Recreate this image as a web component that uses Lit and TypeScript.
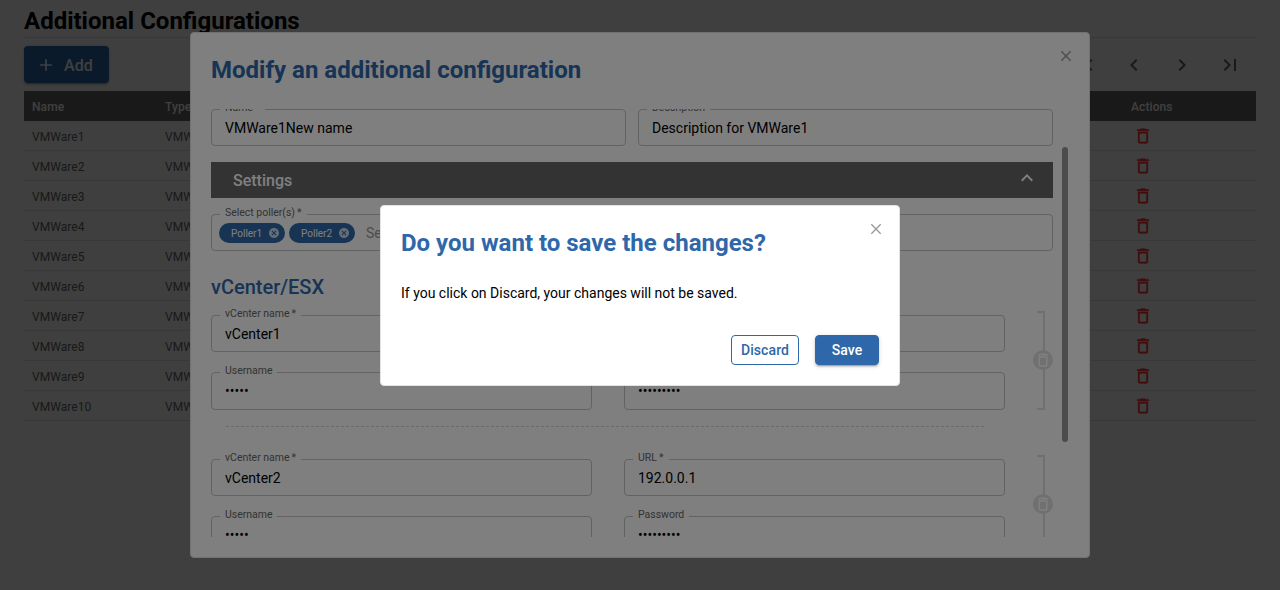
import { LitElement, html, svg, css } from "lit";
import { customElement, property } from "lit/decorators.js";

const trash = svg`<path d="M6 19c0 1.1.9 2 2 2h8c1.1 0 2-.9 2-2V7H6v12zM8 9h8v10H8V9zm7.500-5l-1-1h-5l-1 1H5v2h14V4h-3.500z"/>`;
const cross = svg`<path d="M5 5 19 19M19 5 5 19" fill="none" stroke="currentColor" stroke-width="2"/>`;

@customElement("outlined-field")
class OutlinedField extends LitElement {
  @property() label = "";
  @property() value = "";
  static styles = css`
    :host { display: block; height: 37px; box-sizing: border-box; min-width: 0; }
    fieldset { box-sizing: border-box; margin: -5px 0 0; height: calc(100% + 5px); min-width: 0; padding: 0 8px; border: 1px solid #c4c4c4; border-radius: 4px; }
    legend { height: 11px; padding: 0 5px; font-size: 10.5px; line-height: 11px; letter-spacing: -0.02px; color: #666; white-space: nowrap; }
    .text { display: block; margin-top: -2px; }
    .value { display: flex; align-items: center; height: 25px; padding: 0 5px; font-size: 14px; color: #000; white-space: nowrap; }
  `;
  render() {
    return html`<fieldset><legend><span class="text">${this.label}</span></legend>
      <div class="value"><slot>${this.value}</slot></div></fieldset>`;
  }
}

@customElement("app-root")
class AppRoot extends LitElement {
  static styles = css`
    :host { display: block; position: relative; width: 1280px; height: 590px; overflow: hidden; background: #fff; font-family: Roboto, sans-serif; color: #000; }
    *, *::before { box-sizing: border-box; }
    svg { display: block; fill: currentColor; flex: none; }
    h1, h2, h3, p { margin: 0; }
    .page { padding: 0 24px; }
    h1 { height: 38px; border-bottom: 1px solid #e3e3e3; font-size: 24px; font-weight: 700; line-height: 42px; }
    .bar { display: flex; align-items: center; justify-content: space-between; height: 53px; }
    .add { display: flex; align-items: center; gap: 8px; width: 85px; height: 37px; margin-bottom: 1px; padding: 2px 0 0 12px; border-radius: 4px; background: #2e68aa; color: #fff; font-size: 16px; font-weight: 500; letter-spacing: .1px; box-shadow: 0 3px 1px -2px #0003, 0 2px 2px #0002, 0 1px 5px #0002; }
    .add svg { margin-top: -1px; }
    .pager { display: flex; gap: 24px; padding-right: 14px; color: #666; }
    .head, .row { display: grid; grid-template-columns: 133px 966px 1fr; height: 30px; align-items: center; padding: 2px 0 0 8px; font-size: 12px; }
    .head { background: #666; color: #fff; font-weight: 500; letter-spacing: .1px; }
    .row { border-bottom: 1px solid #e3e3e3; color: #666; letter-spacing: .05px; }
    .row svg { margin: -1px 0 0 2px; color: #ff3a3a; stroke: currentColor; stroke-width: .3; }
    .scrim { position: absolute; inset: 0; background: rgba(0,0,0,.5); }
    .dialog { position: absolute; background: #fff; border: 1px solid #e3e3e3; border-radius: 4px; }
    .edit { left: 190px; top: 32px; width: 900px; height: 526px; padding: 0 20px 20px; display: flex; flex-direction: column; }
    .confirm { left: 380px; top: 205px; width: 520px; height: 181px; padding: 0 20px 20px; }
    .close { position: absolute; right: 15px; top: 15px; color: #999; }
    h2 { font-size: 24px; font-weight: 700; line-height: 28px; color: #2e68aa; white-space: nowrap; }
    .edit h2 { height: 76px; padding-top: 23px; }
    .body { height: 428px; width: 857px; display: flex; justify-content: space-between; overflow: hidden; }
    .form { width: 842px; flex: none; }
    .bar-thumb { width: 6px; height: 295px; margin-top: 38px; border-radius: 3px; background: #999; }
    .pair { display: grid; grid-template-columns: 1fr 1fr; column-gap: 12px; }
    .settings { display: flex; align-items: center; justify-content: space-between; height: 36px; margin: 16px 0; padding: 0 14px 0 22px; background: #666; color: #fff; font-size: 16px; font-weight: 500; }
    .settings svg { margin-top: -4px; }
    .chips { display: flex; align-items: center; gap: 4px; margin: 1px 0 0 -6px; color: #999; }
    .chip { display: flex; align-items: center; justify-content: space-between; width: 66px; height: 20px; padding: 0 5px 0 12px; border-radius: 10px; background: #2e68aa; color: #fff; font-size: 10px; }
    .chip svg { opacity: .75; }
    .hint { margin-left: 7px; }
    h3 { height: 69px; padding-top: 29px; font-size: 20px; font-weight: 500; line-height: 24px; color: #2e68aa; }
    .group { display: flex; justify-content: space-between; height: 95px; }
    .grid { display: grid; grid-template-columns: 381px 381px; grid-template-rows: 37px 38px; gap: 20px 32px; }
    .grid .tall { height: 38px; }
    .bracket { position: relative; display: flex; align-items: center; width: 20px; height: 98px; margin-top: -4px; }
    .bracket::before { content: ""; position: absolute; left: 4px; top: 0; width: 8px; height: 99px; border: 2px solid #e0e0e0; border-left: 0; }
    .remove { display: flex; position: relative; align-items: center; justify-content: center; width: 20px; height: 20px; border-radius: 50%; background: #e0e0e0; color: #fff; }
    .rule { margin: 16px 69px 32px 15px; border-top: 1px dashed #d4d4d4; }
    .confirm h2 { padding-top: 23px; height: 76px; }
    .confirm p { font-size: 14px; line-height: 22px; white-space: nowrap; }
    .actions { display: flex; justify-content: flex-end; gap: 16px; margin-top: 31px; }
    .btn { display: flex; align-items: center; justify-content: center; height: 30px; width: 68px; border: 1px solid #2e68aa; border-radius: 4px; color: #2e68aa; font-size: 14px; font-weight: 500; letter-spacing: .1px; }
    .save { width: 64px; background: #2e68aa; color: #fff; box-shadow: 0 3px 1px -2px #0003, 0 2px 2px #0002, 0 1px 5px #0002; }
  `;

  private icon(paths: unknown, size: number) {
    return html`<svg width=${size} height=${size} viewBox="0 0 24 24">${paths}</svg>`;
  }

  private group(name: string, url: string) {
    return html`<div class="group">
      <div class="grid">
        <outlined-field label="vCenter name&#8201;*" value=${name}></outlined-field>
        <outlined-field label="URL&#8201;*" value=${url}></outlined-field>
        <outlined-field class="tall" label="Username" value="•••••"></outlined-field>
        <outlined-field class="tall" label="Password" value="•••••••••"></outlined-field>
      </div>
      <div class="bracket"><span class="remove">${this.icon(svg`${trash}<path d="M9 11h6v7H9z" fill="#e0e0e0"/>`, 18)}</span></div>
    </div>`;
  }

  private chip(name: string) {
    return html`<span class="chip">${name}${this.icon(svg`<path d="M12 2C6.470 2 2 6.470 2 12s4.470 10 10 10 10-4.470 10-10S17.530 2 12 2zm5 13.590L15.590 17 12 13.410 8.410 17 7 15.590 10.590 12 7 8.410 8.410 7 12 10.590 15.590 7 17 8.410 13.410 12 17 15.590z"/>`, 12)}</span>`;
  }

  render() {
    return html`
      <div class="page">
        <h1>Additional Configurations</h1>
        <div class="bar">
          <div class="add">${this.icon(svg`<path d="M19 13h-6v6h-2v-6H5v-2h6V5h2v6h6v2z"/>`, 20)}Add</div>
          <div class="pager">
            ${this.icon(svg`<path d="M18.410 16.590L13.820 12l4.590-4.590L17 6l-6 6 6 6zM6 6h2v12H6z"/>`, 24)}
            ${this.icon(svg`<path d="M15.410 7.410L14 6l-6 6 6 6 1.410-1.410L10.830 12z"/>`, 24)}
            ${this.icon(svg`<path d="M10 6L8.590 7.410 13.170 12l-4.580 4.590L10 18l6-6z"/>`, 24)}
            ${this.icon(svg`<path d="M5.590 7.410L10.180 12l-4.590 4.590L7 18l6-6-6-6zM16 6h2v12h-2z"/>`, 24)}
          </div>
        </div>
        <div class="head"><span>Name</span><span>Type</span><span>Actions</span></div>
        ${Array.from({ length: 10 }, (_, i) => html`<div class="row"><span>VMWare${i + 1}</span><span>VMWare</span>${this.icon(trash, 20)}</div>`)}
      </div>
      <div class="scrim"></div>
      <section class="dialog edit">
        <span class="close">${this.icon(cross, 16)}</span>
        <h2>Modify an additional configuration</h2>
        <div class="body">
          <div class="form">
            <div class="pair">
              <outlined-field label="Name&#8201;*" value="VMWare1New name"></outlined-field>
              <outlined-field label="Description" value="Description for VMWare1"></outlined-field>
            </div>
            <div class="settings">Settings${this.icon(svg`<path d="M12 8l-6 6 1.410 1.410L12 10.830l4.590 4.580L18 14z"/>`, 24)}</div>
            <outlined-field label="Select poller(s)&#8201;*">
              <div class="chips">${this.chip("Poller1")}${this.chip("Poller2")}<span class="hint">Select poller(s)</span></div>
            </outlined-field>
            <h3>vCenter/ESX</h3>
            ${this.group("vCenter1", "https://10.10.10.10/sdk")}
            <div class="rule"></div>
            ${this.group("vCenter2", "192.0.0.1")}
          </div>
          <div class="bar-thumb"></div>
        </div>
      </section>
      <div class="scrim"></div>
      <section class="dialog confirm">
        <span class="close">${this.icon(cross, 16)}</span>
        <h2>Do you want to save the changes?</h2>
        <p>If you click on Discard, your changes will not be saved.</p>
        <div class="actions"><span class="btn">Discard</span><span class="btn save">Save</span></div>
      </section>
    `;
  }
}
